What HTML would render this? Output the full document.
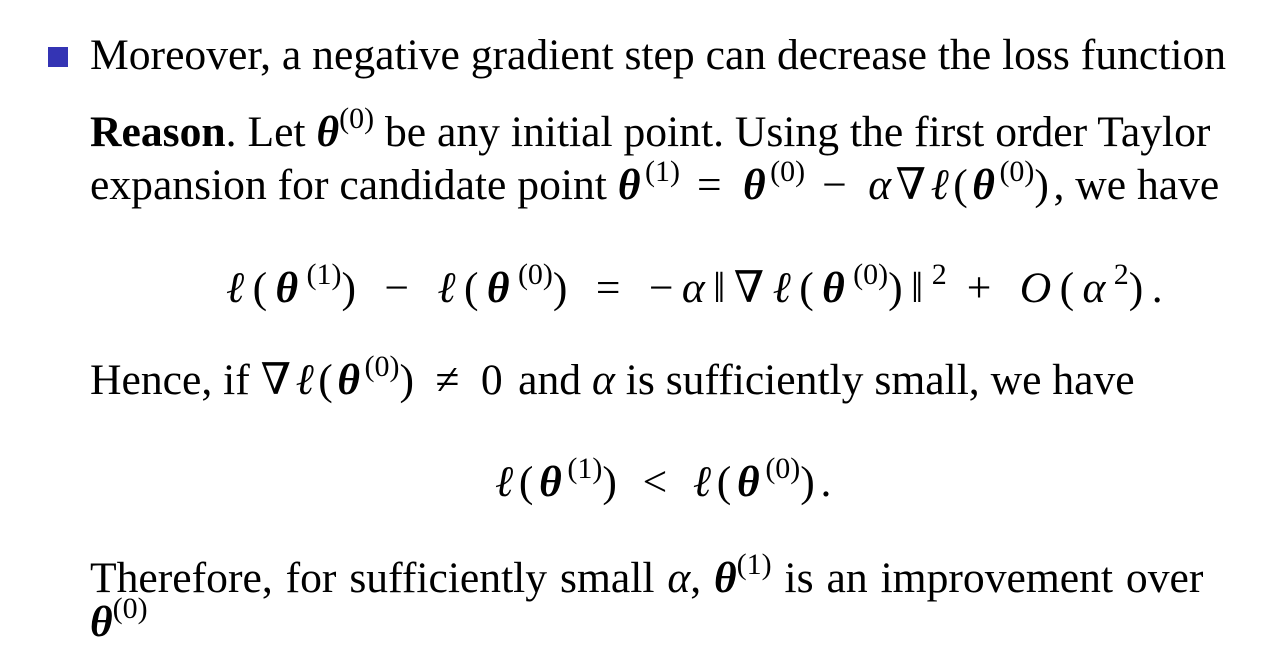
<!DOCTYPE html>
<html><head><meta charset="utf-8"><style>
body{margin:0;width:1262px;height:670px;background:#fff;overflow:hidden;position:relative;font-family:"Liberation Serif","DejaVu Serif",serif;color:#000}
.l{position:absolute;font-size:43.6px;line-height:44px;white-space:nowrap}
i{font-style:italic}
.t{font-weight:bold;font-style:italic}
.m{letter-spacing:4.5px}
.o{margin:0 17px}
.o2{margin:0 20px}
sup{font-size:30px;vertical-align:0;position:relative;top:-18px;font-style:normal;font-weight:normal;letter-spacing:0}
.bul{position:absolute;left:48px;top:47px;width:20px;height:20px;background:#3434b4}
</style></head><body>
<div class="bul"></div>
<div class="l" style="left:90px;top:33px">Moreover, a negative gradient step can decrease the loss function</div>
<div class="l" style="left:90px;top:110px"><b>Reason</b>. Let <span class="t">θ</span><sup>(0)</sup> be any initial point. Using the first order Taylor</div>
<div class="l" style="left:90px;top:163px">expansion for candidate point <span class="m"><span class="t">θ</span><sup>(1)</sup><span class="o">=</span><span class="t">θ</span><sup>(0)</sup><span class="o">−</span><i>α</i>∇<i>ℓ</i>(<span class="t">θ</span><sup>(0)</sup>)</span>, we have</div>
<div class="l" style="left:226px;top:266px;letter-spacing:8.4px"><i>ℓ</i>(<span class="t">θ</span><sup>(1)</sup>)<span class="o2">−</span><i>ℓ</i>(<span class="t">θ</span><sup>(0)</sup>)<span class="o2">=</span>−<i>α</i>‖∇<i>ℓ</i>(<span class="t">θ</span><sup>(0)</sup>)‖<sup>2</sup><span class="o2">+</span><i>O</i>(<i>α</i><sup>2</sup>).</div>
<div class="l" style="left:90px;top:358px">Hence, if <span class="m">∇<i>ℓ</i>(<span class="t">θ</span><sup>(0)</sup>)<span class="o">≠</span>0</span> and <i>α</i> is sufficiently small, we have</div>
<div class="l" style="left:495px;top:460px;letter-spacing:5.7px"><i>ℓ</i>(<span class="t">θ</span><sup>(1)</sup>)<span class="o2">&lt;</span><i>ℓ</i>(<span class="t">θ</span><sup>(0)</sup>).</div>
<div class="l" style="left:90px;top:556px;word-spacing:2px">Therefore, for sufficiently small <i>α</i>, <span class="t">θ</span><sup>(1)</sup> is an improvement over</div>
<div class="l" style="left:90px;top:600px"><span class="t">θ</span><sup>(0)</sup></div>
</body></html>
